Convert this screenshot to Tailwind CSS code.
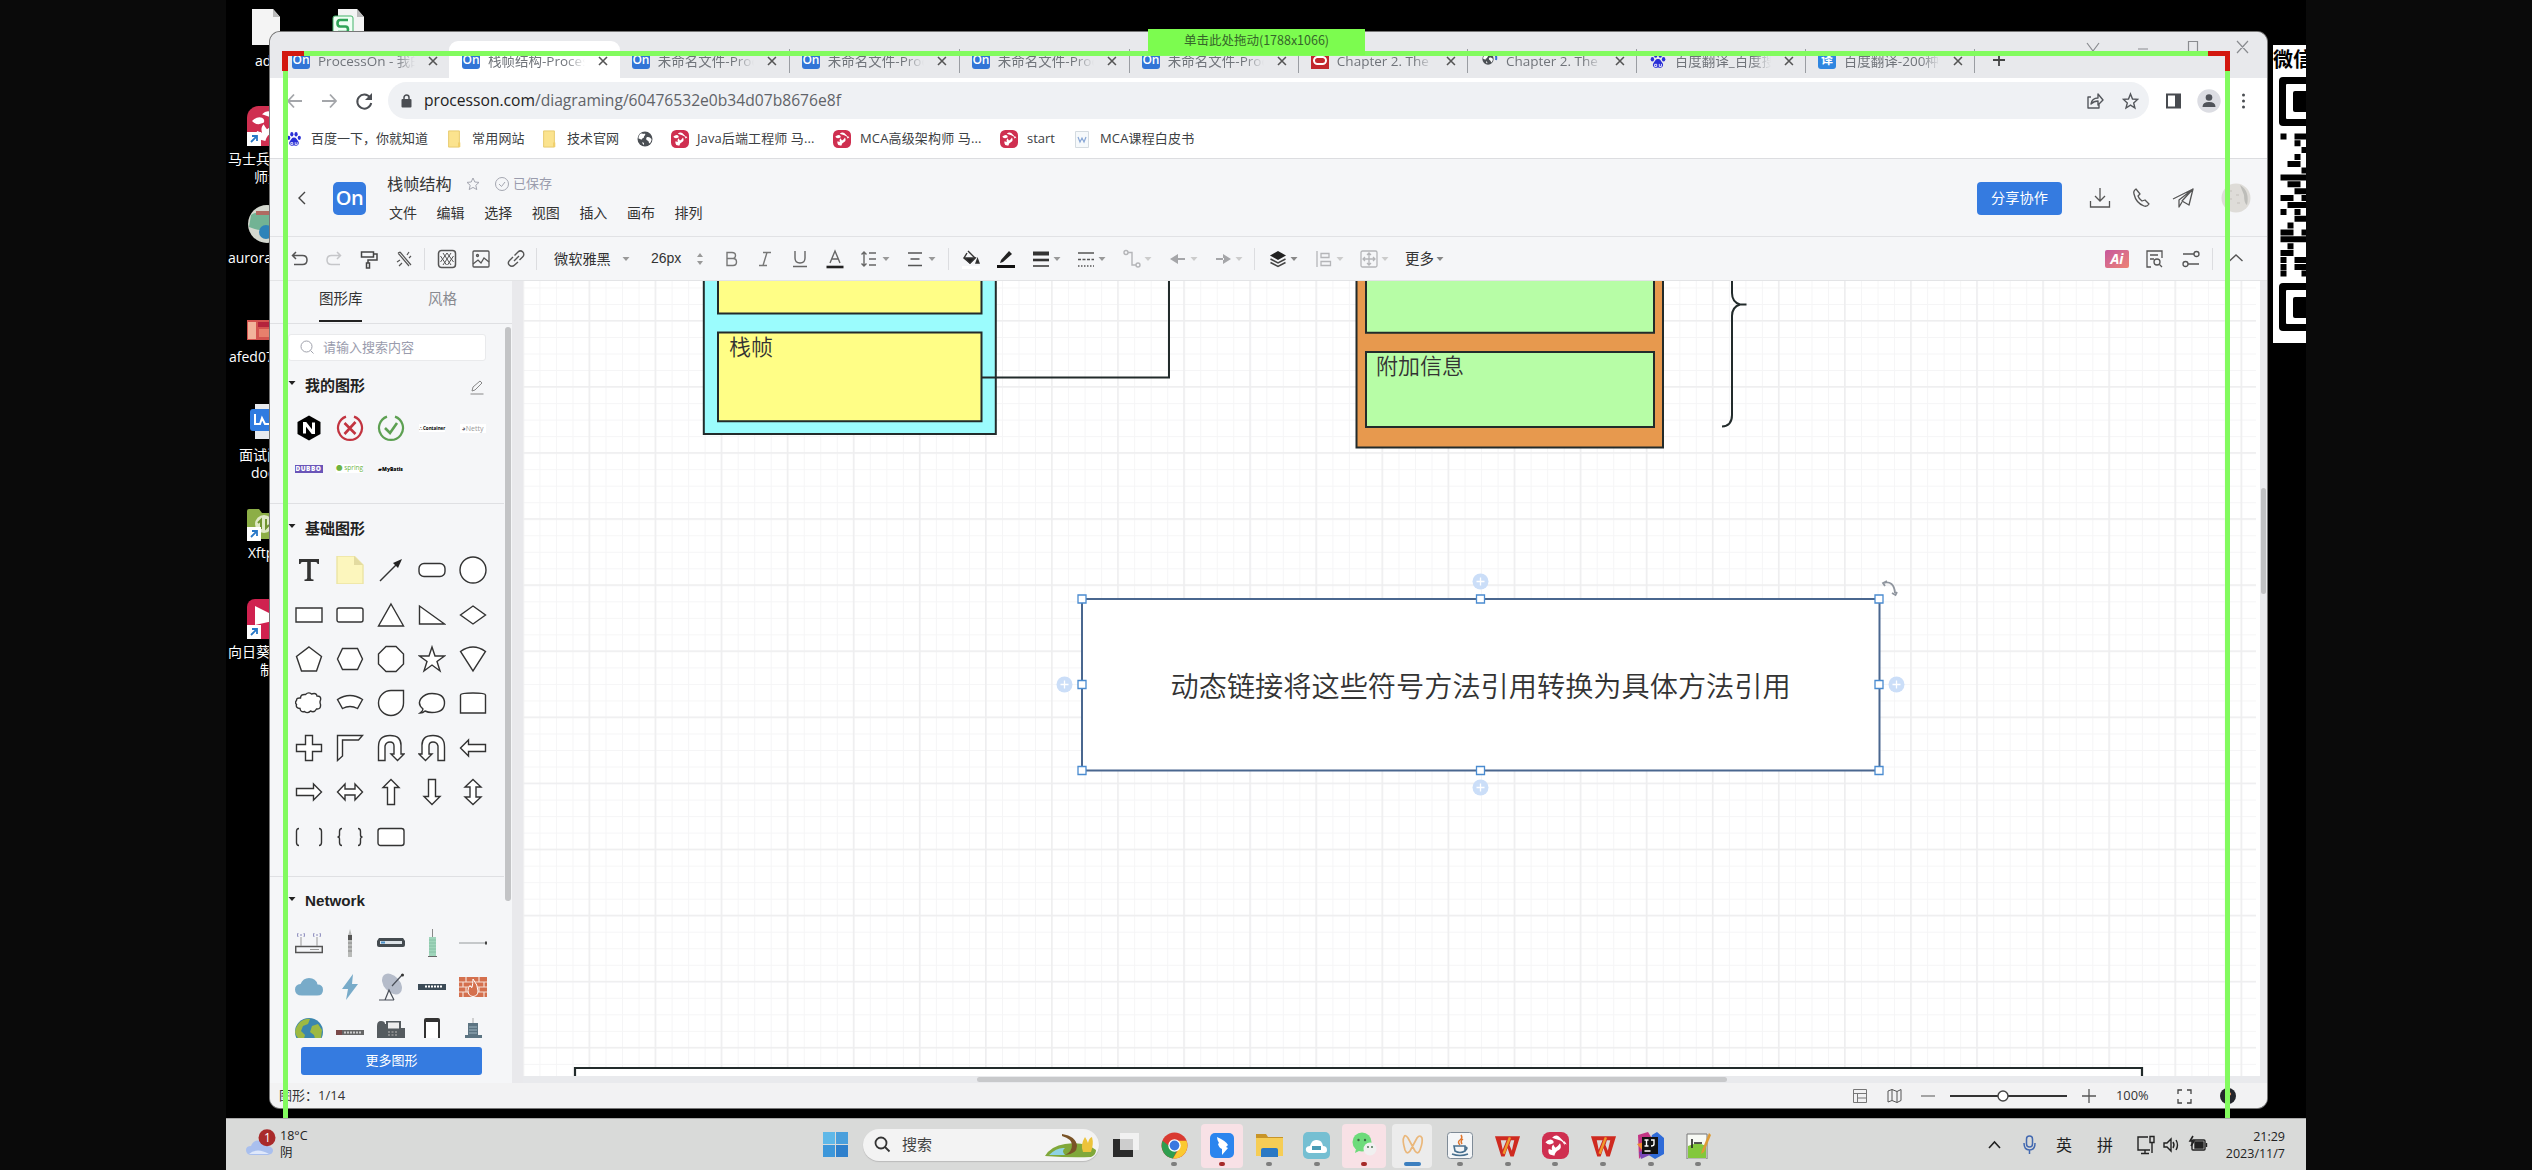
<!DOCTYPE html>
<html lang="zh-CN">
<head>
<meta charset="utf-8">
<title>栈帧结构-ProcessOn</title>
<script src="https://cdn.jsdelivr.net/npm/@tailwindcss/browser@4"></script>
</head>
<body class="bg-[#0a0a0a] overflow-hidden font-['Open_Sans','Noto_Sans_CJK_SC',sans-serif] text-[#333]">
<svg class="hidden">
  <symbol id="caret" viewBox="0 0 8 8"><path d="M.5 2h7L4 6z" fill="currentColor"/></symbol>
  <symbol id="close" viewBox="0 0 10 10"><path d="M1 1l8 8M9 1L1 9" stroke="#555" stroke-width="1.6" fill="none"/></symbol>
  <symbol id="deer" viewBox="0 0 24 24"><rect width="24" height="24" rx="7" fill="#cf2f50"/><path d="M3 9q3-3 6-2 2 1 1 3l-3 1q-2 0-4-2zM9 5q3-3 6-1l4 4q2 2 1 4-1-4-5-5-3-1-6-2z" fill="#fff"/><path d="M16 10q2 4-1 6-3 1-4 5l-4-1q-2-2-1-5l3 1q-1-3 1-5 1 2 2 3 2-1 4-4zM20 8l2 3-3-1z" fill="#fff"/></symbol>
  <symbol id="paw" viewBox="0 0 20 20"><g fill="#2a2fd6"><ellipse cx="3.4" cy="8.5" rx="2" ry="2.7"/><ellipse cx="7.3" cy="4" rx="2" ry="2.8"/><ellipse cx="12.6" cy="4" rx="2" ry="2.8"/><ellipse cx="16.6" cy="8.5" rx="2" ry="2.7"/><path d="M10 8.2c-3 0-3.300 2.500-5 4.300-2.200 2.500-.5 6 2.500 6 1.300 0 1.700-.3 2.500-.3s1.200.3 2.500.3c3 0 4.700-3.500 2.500-6-1.700-1.800-2-4.300-5-4.300z"/></g><path d="M6 14.500h2.500v2.500H6zM11.500 14v3H14v-3" fill="none" stroke="#fff" stroke-width="1"/></symbol>
  <symbol id="folder" viewBox="0 0 16 20"><path d="M2 1h12v18H2z" fill="#fbe38e" stroke="#e5c768"/><path d="M12.500 14H15v5h-2.500z" fill="#f1cf6a"/></symbol>
  <symbol id="globe" viewBox="0 0 16 16"><circle cx="8" cy="8" r="7.500" fill="#4b4f54"/><path d="M4 2.500c2 0 3 1 4 0 1 2-1 2-1 3.500S4.500 7 5 8.500c-1 .5-2-1-3.500-1C1.500 5 2.500 3.500 4 2.500zM9.500 6.500c2-1 3.500 0 5 1.500 0 2-1 3.500-2 4.500-1-1-.5-2.500-2-3s-1.500-2-1-3zM5.500 11c1 .5 2 1 1.500 2.800-1 0-2-1.800-1.500-2.800z" fill="#fff"/></symbol>
  <symbol id="wps" viewBox="0 0 28 24"><path d="M1 2h26l-6.500 21h-3.500L14 14l-3 9H7.500z" fill="#cf2a20"/><path d="M7 6h6l-4 10zM21 6h-3.500L16 11l2.500 6z" fill="#dadada"/><path d="M16.500 3L10 20" stroke="#ef9a2c" stroke-width="2.500"/></symbol>
  <symbol id="link" viewBox="0 0 14 14"><path d="M0 0h14v14H0z" fill="#fff"/><path d="M4 10l6-6M5 4h5v5" stroke="#2878c8" stroke-width="1.800" fill="none"/></symbol>
</svg>

<div class="relative w-[2532px] h-[1170px] overflow-hidden">
<!-- desktop -->
<div class="absolute left-[226px] top-0 w-[2080px] h-[1170px] bg-black overflow-hidden text-white text-[14px] leading-[18px] whitespace-nowrap">
  <svg class="absolute left-[26px] top-[9px]" width="28" height="36"><path d="M0 0h21l7 8v28H0z" fill="#f4f4f4"/><path d="M21 0v8h7z" fill="#bbb"/></svg>
  <svg class="absolute left-[106px] top-[9px]" width="32" height="30"><path d="M6 0h19l7 8v22H6z" fill="#f4f4f4"/><path d="M25 0v8h7z" fill="#bbb"/><rect x="1" y="7" width="20" height="25" rx="2" fill="#f0fff4" stroke="#45b36a"/><path d="M16 11H8q-2.500 0-2.500 3.200T8 17.500h5.500q2.500 0 2.500 3T13.500 23H6" fill="none" stroke="#2fa457" stroke-width="2.600"/></svg>
  <span class="absolute left-[29px] top-[52px]">ad</span>
  <svg class="absolute left-[21px] top-[106px]" width="38" height="40"><use href="#deer" width="40" height="40"/><use href="#link" y="26" width="14" height="14"/></svg>
  <span class="absolute left-[2px] top-[150px]">马士兵直</span>
  <span class="absolute left-[28px] top-[168px]">师资</span>
  <svg class="absolute left-[22px] top-[205px]" width="38" height="38"><circle cx="19" cy="19" r="19" fill="#d4d8cf"/><path d="M3 10c6-4 12-3 20 0v12c-8 5-14 3-22 0z" fill="#72b394"/><circle cx="18" cy="27" r="7" fill="#2d83b9"/><path d="M8 6h20v4H8z" fill="#b06a61"/></svg>
  <span class="absolute left-[2px] top-[249px]">aurora</span>
  <svg class="absolute left-[21px] top-[320px]" width="38" height="20"><path d="M0 0h38v20H0z" fill="#d4544f"/><path d="M1 2h8v17H1z" fill="#f2b39a"/><path d="M11 2h20v5H11z" fill="#b4243c"/><path d="M12 9h16v8H12z" fill="#e8806c"/></svg>
  <span class="absolute left-[3px] top-[348px]">afed07</span>
  <svg class="absolute left-[24px] top-[404px]" width="38" height="36"><path d="M5 0h30v35H5z" fill="#e8eaee"/><rect y="5" width="24" height="22" rx="3" fill="#2f7be0"/><path d="M5 10v10h5l2-6 3 6h5V10" fill="none" stroke="#fff" stroke-width="2"/></svg>
  <span class="absolute left-[13px] top-[446px]">面试问</span>
  <span class="absolute left-[25px] top-[464px]">doc</span>
  <svg class="absolute left-[21px] top-[509px]" width="38" height="32"><path d="M0 2q0-2 2-2h10l3 4h20v26H0z" fill="#8cae46"/><circle cx="17" cy="15" r="9" fill="#dfe9c6"/><path d="M14 20v-9l-3 3M19 10v9l3-3" fill="none" stroke="#6f9430" stroke-width="2"/><use href="#link" y="18" width="14" height="14"/></svg>
  <span class="absolute left-[22px] top-[544px]">Xftp</span>
  <svg class="absolute left-[21px] top-[599px]" width="38" height="40"><rect width="40" height="40" rx="8" fill="#d0214f"/><path d="M8 7l18 9v6L8 26z" fill="#fff"/><use href="#link" y="26" width="14" height="14"/></svg>
  <span class="absolute left-[2px] top-[643px]">向日葵远</span>
  <span class="absolute left-[34px] top-[661px]">制</span>
  <!-- QR card -->
  <svg class="absolute left-[2047px] top-[45px] font-['Noto_Sans_CJK_SC',sans-serif]" width="33" height="298" viewBox="0 0 33 298"><path d="M0 0h40v298H0z" fill="#fff"/><text x="0" y="22" font-size="20" font-weight="700" fill="#000">微信</text>
  <g fill="#000"><rect x="6" y="32" width="60" height="49" rx="4"/><rect x="6" y="238" width="60" height="48" rx="4"/></g><g fill="#fff"><rect x="13" y="39" width="40" height="35" rx="1"/><rect x="13" y="245" width="40" height="34" rx="1"/></g><g fill="#000"><rect x="20" y="46" width="30" height="21" rx="2"/><rect x="20" y="252" width="30" height="21" rx="2"/></g>
  <path stroke="#000" stroke-width="6" fill="none" d="M7.500 91.500h6m8 0h12M21.500 98.300h6M28.500 105h6M21.500 112h6M14.500 119h13M28.500 125.500h6M7.500 132.500h26M14.500 139.300h13M21.500 146.200h13M7.500 153h13m8 0h6M14.500 160h20M7.500 167h6m8 0h6M21.500 173.800h13M14.500 180.600h6M7.500 187.500h13m8 0h6M7.500 194.300h26M14.500 201.200h6M7.500 208h13M7.500 215h6m8 0h12M7.500 222h6m8 0h12M7.500 228.600h6m15 0h6"/></svg>
</div>

<!-- browser window -->
<div class="absolute left-[270px] top-[32px] w-[1997px] h-[1076px] rounded-[10px] overflow-hidden bg-[#f5f6f8] flex flex-col whitespace-nowrap shadow-[0_0_0_1px_#777]">
  <!-- tab strip -->
  <div class="h-[46px] shrink-0 bg-[#e8e9ec] flex items-end text-[13.5px] text-[#70747a]">
    <div class="w-[179px] h-[37px] pl-[22px] pt-[11px] flex shrink-0"><span class="w-[18px] h-[17px] rounded-[3px] bg-[#3275d6] text-white text-[12px] leading-[16px] font-semibold text-center">On</span><span class="ml-[8px] w-[97px] overflow-hidden leading-[18px] mask-r-from-80%">ProcessOn - 我的</span><svg class="mt-[4px] ml-[13px]" width="10" height="10"><use href="#close"/></svg></div>
    <div class="w-[171px] h-[37px] pl-[13px] pt-[11px] flex shrink-0 bg-white rounded-t-[9px]"><span class="w-[18px] h-[17px] rounded-[3px] bg-[#3275d6] text-white text-[12px] leading-[16px] font-semibold text-center">On</span><span class="ml-[8px] w-[97px] overflow-hidden leading-[18px] mask-r-from-80%">栈帧结构-ProcessOn</span><svg class="mt-[4px] ml-[13px]" width="10" height="10"><use href="#close"/></svg></div>
    <div class="w-[170px] h-[37px] pl-[12px] pt-[11px] flex shrink-0"><span class="w-[18px] h-[17px] rounded-[3px] bg-[#3275d6] text-white text-[12px] leading-[16px] font-semibold text-center">On</span><span class="ml-[8px] w-[97px] overflow-hidden leading-[18px] mask-r-from-80%">未命名文件-ProcessOn</span><svg class="mt-[4px] ml-[13px]" width="10" height="10"><use href="#close"/></svg><i class="ml-[12px] -mt-[3px] w-px h-[24px] bg-[#9a9da2]"></i></div>
    <div class="w-[170px] h-[37px] pl-[12px] pt-[11px] flex shrink-0"><span class="w-[18px] h-[17px] rounded-[3px] bg-[#3275d6] text-white text-[12px] leading-[16px] font-semibold text-center">On</span><span class="ml-[8px] w-[97px] overflow-hidden leading-[18px] mask-r-from-80%">未命名文件-ProcessOn</span><svg class="mt-[4px] ml-[13px]" width="10" height="10"><use href="#close"/></svg><i class="ml-[12px] -mt-[3px] w-px h-[24px] bg-[#9a9da2]"></i></div>
    <div class="w-[170px] h-[37px] pl-[12px] pt-[11px] flex shrink-0"><span class="w-[18px] h-[17px] rounded-[3px] bg-[#3275d6] text-white text-[12px] leading-[16px] font-semibold text-center">On</span><span class="ml-[8px] w-[97px] overflow-hidden leading-[18px] mask-r-from-80%">未命名文件-ProcessOn</span><svg class="mt-[4px] ml-[13px]" width="10" height="10"><use href="#close"/></svg><i class="ml-[12px] -mt-[3px] w-px h-[24px] bg-[#9a9da2]"></i></div>
    <div class="w-[169px] h-[37px] pl-[12px] pt-[11px] flex shrink-0"><span class="w-[18px] h-[17px] rounded-[3px] bg-[#3275d6] text-white text-[12px] leading-[16px] font-semibold text-center">On</span><span class="ml-[8px] w-[97px] overflow-hidden leading-[18px] mask-r-from-80%">未命名文件-ProcessOn</span><svg class="mt-[4px] ml-[13px]" width="10" height="10"><use href="#close"/></svg><i class="ml-[11px] -mt-[3px] w-px h-[24px] bg-[#9a9da2]"></i></div>
    <div class="w-[169px] h-[37px] pl-[12px] pt-[11px] flex shrink-0"><svg width="18" height="17"><path d="M0 0h18v17H0z" fill="#c2272d"/><rect x="3" y="5" width="12" height="7" rx="3.500" fill="none" stroke="#fff" stroke-width="2"/></svg><span class="ml-[8px] w-[97px] overflow-hidden leading-[18px] mask-r-from-80%">Chapter 2. The St</span><svg class="mt-[4px] ml-[13px]" width="10" height="10"><use href="#close"/></svg><i class="ml-[11px] -mt-[3px] w-px h-[24px] bg-[#9a9da2]"></i></div>
    <div class="w-[169px] h-[37px] pl-[14px] pt-[11px] flex shrink-0"><svg width="16" height="17"><use href="#globe" y="1" width="12" height="12"/><path d="M12 1q3 2 2 7" stroke="#3a6fd0" stroke-width="2" fill="none"/></svg><span class="ml-[8px] w-[97px] overflow-hidden leading-[18px] mask-r-from-80%">Chapter 2. The St</span><svg class="mt-[4px] ml-[13px]" width="10" height="10"><use href="#close"/></svg><i class="ml-[11px] -mt-[3px] w-px h-[24px] bg-[#9a9da2]"></i></div>
    <div class="w-[169px] h-[37px] pl-[12px] pt-[11px] flex shrink-0"><svg width="18" height="17"><use href="#paw" width="18" height="17"/></svg><span class="ml-[8px] w-[97px] overflow-hidden leading-[18px] mask-r-from-80%">百度翻译_百度搜索</span><svg class="mt-[4px] ml-[13px]" width="10" height="10"><use href="#close"/></svg><i class="ml-[11px] -mt-[3px] w-px h-[24px] bg-[#9a9da2]"></i></div>
    <div class="w-[169px] h-[37px] pl-[12px] pt-[11px] flex shrink-0"><span class="w-[18px] h-[17px] rounded-[3px] bg-[#2f86e0] text-white text-[12px] leading-[16px] font-bold text-center">译</span><span class="ml-[8px] w-[97px] overflow-hidden leading-[18px] mask-r-from-80%">百度翻译-200种语言</span><svg class="mt-[4px] ml-[13px]" width="10" height="10"><use href="#close"/></svg><i class="ml-[11px] -mt-[3px] w-px h-[24px] bg-[#9a9da2]"></i></div>
    <svg class="ml-[18px] mb-[12px]" width="12" height="12"><path d="M6 0v12M0 6h12" stroke="#444" stroke-width="1.800"/></svg>
    <svg class="ml-auto mr-[18px] mb-[23px]" width="163" height="16" fill="none" stroke="#8a8c90" stroke-width="1.200"><path d="M1 4l6 8 6-8M52 10h10M102.500 2.500h9v11h-9zM151 2l11 12M162 2l-11 12"/></svg>
  </div>
  <!-- address bar -->
  <div class="h-[45px] shrink-0 bg-white flex items-center">
    <svg class="ml-[16px]" width="90" height="20" fill="none" stroke="#a4a6aa" stroke-width="1.800"><path d="M16 10H2m6-6.500L2 10l6 6.500M36 10h14m-6-6.500l6 6.500-6 6.500"/><path d="M84 6.500A7 7 0 1 0 85.200 12" stroke="#4c4f54" stroke-width="2"/><path d="M86 2v7h-7z" fill="#4c4f54" stroke="none"/></svg>
    <div class="ml-[12px] w-[1761px] h-[37px] rounded-full bg-[#eff1f4] flex items-center">
      <svg class="ml-[13px]" width="11" height="14"><rect x=".5" y="5" width="10" height="8.500" rx="1" fill="#4b4e53"/><path d="M3 5V3.500a2.500 2.500 0 0 1 5 0V5" stroke="#4b4e53" stroke-width="1.500" fill="none"/></svg>
      <span class="ml-[12px] text-[15.64px] leading-[20px] text-[#5f6368] -mt-px"><span class="text-[#222]">processon.com</span>/diagraming/60476532e0b34d07b8676e8f</span>
      <svg class="ml-auto mr-[10px]" width="54" height="18" fill="none" stroke="#54575c" stroke-width="1.400"><path d="M6 5H3v11h11v-4M6 12q1-6 7-6V2l5 6-5 5V9q-4 0-7 3z" stroke-linejoin="round"/><path d="M45.500 2l2 5 5 .4-3.800 3.500 1.200 5.100-4.400-2.800L41 16l1.300-5.100-3.800-3.500 5-.4z"/></svg>
    </div>
    <svg class="ml-[16px]" width="86" height="24"><path d="M2 5.500h13v13H2z" fill="none" stroke="#484b50" stroke-width="2"/><path d="M10 5h5v14h-5z" fill="#484b50"/><circle cx="44" cy="12" r="11.700" fill="#dcdde3"/><circle cx="44" cy="8.500" r="3.300" fill="#50535a"/><path d="M37.500 18q0-5 6.500-5t6.500 5z" fill="#50535a"/><g fill="#4a4d52"><circle cx="78.500" cy="6" r="1.500"/><circle cx="78.500" cy="12" r="1.500"/><circle cx="78.500" cy="18" r="1.500"/></g></svg>
  </div>
  <!-- bookmarks -->
  <div class="h-[36px] shrink-0 bg-white border-b border-[#dcdde0] pb-[3px] flex items-center text-[13px] text-[#3c4043]">
    <svg class="ml-[16px]" width="16" height="16"><use href="#paw"/></svg><span class="ml-[9px] w-[118px]">百度一下，你就知道</span>
    <svg class="ml-[17px]" width="16" height="18"><use href="#folder"/></svg><span class="ml-[10px] w-[53px] tracking-[.2px]">常用网站</span>
    <svg class="ml-[16px]" width="16" height="18"><use href="#folder"/></svg><span class="ml-[10px] w-[53px]">技术官网</span>
    <svg class="ml-[17px]" width="16" height="16"><use href="#globe"/></svg>
    <svg class="ml-[18px]" width="18" height="18"><use href="#deer"/></svg><span class="ml-[8px] w-[119px] tracking-[.1px]">Java后端工程师 马...</span>
    <svg class="ml-[17px]" width="18" height="18"><use href="#deer"/></svg><span class="ml-[9px] w-[124px] tracking-[.15px]">MCA高级架构师 马...</span>
    <svg class="ml-[16px]" width="18" height="18"><use href="#deer"/></svg><span class="ml-[9px] w-[30px]">start</span>
    <svg class="ml-[18px]" width="14" height="17"><path d="M.5.500h13v16H.5z" fill="#f6f9fb" stroke="#d4dbe0"/><path d="M3 6l2 5 2-4 2 4 2-5" fill="none" stroke="#8aa8d6" stroke-width="1.200"/></svg><span class="ml-[11px] tracking-[.15px]">MCA课程白皮书</span>
  </div>
  <!-- app header -->
  <div class="h-[78px] shrink-0 border-b border-[#e1e2e5] pt-px flex items-center">
    <svg class="ml-[28px]" width="8" height="14"><path d="M7 1L1 7l6 6" fill="none" stroke="#444" stroke-width="1.400"/></svg>
    <span class="ml-[27px] w-[33px] h-[33px] rounded-[5px] bg-[#357be0] text-white text-[20px] leading-[32px] font-semibold text-center tracking-[-.5px]">On</span>
    <div class="ml-[21px]">
      <div class="h-[29px] flex items-center"><span class="text-[16.200px] leading-[24px] w-[66px]">栈帧结构</span><svg class="ml-[13px]" width="14" height="14"><path d="M7 1l1.800 4 4.200.4-3.200 2.900 1 4.300L7 10.400l-3.800 2.200 1-4.300L1 5.400 5.200 5z" fill="none" stroke="#a4a6b0"/></svg><svg class="ml-[15px]" width="14" height="14" fill="none" stroke="#a4a6b0"><circle cx="7" cy="7" r="6.500"/><path d="M4 7l2.500 2.500L10 5"/></svg><span class="ml-[4px] text-[13px] text-[#9a9cad]">已保存</span></div>
      <div class="h-[29px] ml-[2px] flex items-center text-[14px] gap-[19.600px]"><span>文件</span><span>编辑</span><span>选择</span><span>视图</span><span>插入</span><span>画布</span><span>排列</span></div>
    </div>
    <span class="ml-auto w-[85px] h-[33px] rounded-[4px] bg-[#357be0] text-white text-[14.200px] leading-[31px] text-center">分享协作</span>
    <svg class="ml-[27px]" width="106" height="22" fill="none" stroke="#555" stroke-width="1.300"><path d="M11 1v13m-5-5l5 5 5-5M1.500 14v6h19v-6"/><path d="M47 2q-3 2-2 5 2 9 10 12 3 1 5-2l-4-4-3 1q-3-2-4-5l2-2z" stroke-linejoin="round"/><path d="M84 12L104 2l-4 16-7-4 11-12-14 11v7l3-5" stroke-linejoin="round"/></svg>
    <svg class="ml-[26px] mr-[16px]" width="30" height="30"><circle cx="15" cy="15" r="14.500" fill="#dedcd8"/><path d="M19 2q10 6 7 20-3-2-3-10z" fill="#bdbdb9"/><path d="M8 8h3m4 4h3M8 16h3m5 4h3" stroke="#c4c0bb"/></svg>
  </div>
  <!-- toolbar -->
  <div class="h-[44px] shrink-0 border-b border-[#e3e4e6] flex items-center text-[#555]">
    <svg class="ml-[18px]" width="24" height="24" fill="none" stroke="#555" stroke-width="1.500"><path d="M8 5L4.500 8.500 8 12M5 8.500h9.500q4.500 0 4.500 4.500t-4.500 4.500H6"/></svg>
    <svg class="ml-[10px]" width="24" height="24" fill="none" stroke="#c5c6c9" stroke-width="1.500"><path d="M15 5l3.500 3.500L15 12M18 8.500H9.500Q5 8.500 5 13t4.500 4.500H18"/></svg>
    <svg class="ml-[11px]" width="24" height="24" fill="none" stroke="#444" stroke-width="1.500"><path d="M4.500 5h12v5h-12zM16.500 7H20v6h-9v3M9.500 16h3v5h-3z"/></svg>
    <svg class="ml-[11px]" width="24" height="24" fill="none" stroke="#555" stroke-width="1.200"><path d="M6 6l11 13M8 5l11 13M17 5l-2 3M19 9l-2 2M5 15l3-2M7 19l3-3M6 6l2-1"/></svg>
    <i class="ml-[8px] w-px h-[22px] bg-[#dcdde0]"></i>
    <svg class="ml-[10px]" width="24" height="24" fill="none" stroke="#555" stroke-width="1.500"><rect x="3.500" y="3.500" width="17" height="17" rx="3"/><path d="M8 6l8 12M16 6L8 18M5.500 9l6 9M18.500 9l-6 9M12 6l6.500 9M12 6l-6.500 9" stroke-width="1"/></svg>
    <svg class="ml-[10px]" width="24" height="24" fill="none" stroke="#555" stroke-width="1.300"><rect x="4" y="4" width="16" height="16" rx="1"/><path d="M4 17l5-4 3 3 3-5 5 4"/><circle cx="8.500" cy="8.500" r="1"/></svg>
    <svg class="ml-[11px]" width="24" height="24" fill="none" stroke="#555" stroke-width="1.400"><path d="M10 14l5-5M9 10l-3.500 3.500a3.300 3.300 0 0 0 4.800 4.800L14 15M10.500 8.500L14 5a3.300 3.300 0 0 1 4.800 4.800L15.500 13"/></svg>
    <i class="ml-[8px] w-px h-[22px] bg-[#dcdde0]"></i>
    <span class="ml-[17px] w-[58px] text-[14.200px] text-[#333]">微软雅黑</span><svg class="ml-[10px] text-[#999]" width="8" height="8"><use href="#caret"/></svg>
    <span class="ml-[21px] w-[34px] text-[14px] text-[#333] font-['Liberation_Sans',sans-serif]">26px</span>
    <svg class="ml-[10px]" width="10" height="14" fill="#999"><path d="M2 5l3-4 3 4zM2 9l3 4 3-4z"/></svg>
    <svg class="ml-[14px]" width="24" height="24" fill="none" stroke="#777" stroke-width="1.400"><path d="M8 5.500h5q3.500 0 3.500 3t-3.500 3H8zM8 11.500h6q3.500 0 3.500 3.500t-3.500 3.500H8z"/></svg>
    <svg class="ml-[10px]" width="24" height="24" fill="none" stroke="#777" stroke-width="1.400"><path d="M10 5.500h8M6 18.500h8M14 5.500l-4 13"/></svg>
    <svg class="ml-[11px]" width="24" height="24" fill="none" stroke="#666" stroke-width="1.400"><path d="M7 4v7q0 5 5 5t5-5V4M5 19.500h14"/></svg>
    <svg class="ml-[11px]" width="24" height="24" fill="none" stroke="#666" stroke-width="1.400"><path d="M7 16l5-12 5 12M9 12h6"/><path d="M3.500 20h17" stroke="#222" stroke-width="2.600"/></svg>
    <svg class="ml-[10px]" width="24" height="24" fill="none" stroke="#666" stroke-width="1.400"><path d="M7 5v14M4.500 7.500L7 5l2.500 2.500M4.500 16.500L7 19l2.500-2.500M12 6h7M12 12h7M12 18h7"/></svg><svg class="ml-px text-[#999]" width="8" height="8"><use href="#caret"/></svg>
    <svg class="ml-[13px]" width="24" height="24" fill="none" stroke="#555" stroke-width="1.400"><path d="M5 6h14M7.500 12h9M5 18.500h14"/></svg><svg class="ml-px text-[#999]" width="8" height="8"><use href="#caret"/></svg>
    <i class="ml-[12px] w-px h-[22px] bg-[#dcdde0]"></i>
    <svg class="ml-[10px]" width="24" height="24" fill="none" stroke="#333" stroke-width="1.400"><path d="M9 4l7 7-5 5-6-5 3-5"/><path d="M6 11h10l-5 5z" fill="#222"/><path d="M18.500 12l1.500 4h-3z" fill="#222"/><path d="M3 20.500h18" stroke="#fff" stroke-width="3"/></svg>
    <svg class="ml-[11px]" width="24" height="24"><path d="M7 13l8-9 3 3-9 8-3 1z" fill="#222"/><path d="M3 18h18v3H3z" fill="#111"/></svg>
    <svg class="ml-[11px]" width="24" height="24" stroke="#333"><path d="M4 6.500h16" stroke-width="4"/><path d="M4 13h16" stroke-width="2.600"/><path d="M4 19h16" stroke-width="1.500"/></svg><svg class="text-[#999]" width="8" height="8"><use href="#caret"/></svg>
    <svg class="ml-[13px]" width="24" height="24" stroke="#555" stroke-width="1.400"><path d="M4 6h16"/><path d="M4 12.500h16" stroke-dasharray="3 1.500"/><path d="M4 19h16" stroke-dasharray="1.500 1.500"/></svg><svg class="text-[#999]" width="8" height="8"><use href="#caret"/></svg>
    <svg class="ml-[14px]" width="24" height="24" fill="none" stroke="#b4b5b8" stroke-width="1.400"><circle cx="6" cy="5.500" r="2"/><circle cx="18" cy="18" r="2"/><path d="M8 5.500h4V18h4"/></svg><svg class="text-[#ccc]" width="8" height="8"><use href="#caret"/></svg>
    <svg class="ml-[14px]" width="24" height="24"><path d="M4 12l8-5v10zM11 11h8v2h-8z" fill="#a5a6a9"/></svg><svg class="text-[#ccc]" width="8" height="8"><use href="#caret"/></svg>
    <svg class="ml-[13px]" width="24" height="24"><path d="M20 12l-8-5v10zM5 11h8v2H5z" fill="#a5a6a9"/></svg><svg class="text-[#ccc]" width="8" height="8"><use href="#caret"/></svg>
    <i class="ml-[11px] w-px h-[22px] bg-[#dcdde0]"></i>
    <svg class="ml-[11px]" width="24" height="24"><path d="M12 4l8 4.500-8 4.500-8-4.500z" fill="#222"/><path d="M4.500 12l7.500 4 7.500-4M4.500 15.500l7.500 4 7.500-4" fill="none" stroke="#444" stroke-width="1.500"/></svg><svg class="text-[#888]" width="8" height="8"><use href="#caret"/></svg>
    <svg class="ml-[14px]" width="24" height="24" fill="none" stroke="#b4b5b8" stroke-width="1.300"><path d="M5 4v16M9 6.500h8v4H9zM9 14.500h9.500v4H9z"/></svg><svg class="text-[#ccc]" width="8" height="8"><use href="#caret"/></svg>
    <svg class="ml-[13px]" width="24" height="24" fill="none" stroke="#b4b5b8" stroke-width="1.300"><rect x="4" y="4" width="16" height="16" rx="1.500"/><path d="M12 6v12M6 12h12M10 8l2-2 2 2M10 16l2 2 2-2M8 10l-2 2 2 2M16 10l2 2-2 2"/></svg><svg class="text-[#ccc]" width="8" height="8"><use href="#caret"/></svg>
    <span class="ml-[16px] w-[30px] text-[14.500px] text-[#333]">更多</span><svg class="ml-px text-[#888]" width="8" height="8"><use href="#caret"/></svg>
    <span class="ml-auto w-[24px] h-[18px] rounded-[2px] bg-linear-to-br from-[#c6579c] to-[#ee8272] text-white text-[14px] leading-[18px] font-bold italic text-center">Ai</span>
    <svg class="ml-[13px]" width="24" height="24" fill="none" stroke="#555" stroke-width="1.300"><path d="M9 20H5V4h15v7M8 8h8M8 12h4"/><circle cx="15" cy="15" r="3"/><path d="M17.500 17.500L20 20"/></svg>
    <svg class="ml-[13px]" width="24" height="24" fill="none" stroke="#555" stroke-width="1.300"><path d="M4 7h11M9 17h11"/><circle cx="17.500" cy="7" r="2.500"/><circle cx="6.500" cy="17" r="2.500"/></svg>
    <i class="ml-[9px] w-px h-[22px] bg-[#dcdde0]"></i>
    <svg class="ml-[11px] mr-[19px]" width="24" height="24"><path d="M5.500 14L12 8l6.500 6" fill="none" stroke="#555" stroke-width="1.400"/></svg>
  </div>

  <div class="flex-1 flex min-h-0">
    <!-- shape library -->
    <div class="w-[242px] shrink-0 flex flex-col relative">
      <div class="h-[43px] shrink-0 border-b border-[#dfe0e3] flex text-[14.500px]">
        <span class="ml-[49px] h-[41px] w-[43px] border-b-2 border-[#222] leading-[36px]">图形库</span><span class="ml-[66px] leading-[36px] text-[#888a90]">风格</span>
      </div>
      <div class="ml-[18px] mt-[10px] w-[198px] h-[27px] shrink-0 rounded-[3px] bg-white border border-[#e9eaec] flex items-center text-[13px] text-[#9a9cad]"><svg class="ml-[11px] mr-[8px]" width="15" height="15" fill="none" stroke="#a0a2ac"><circle cx="6.500" cy="6.500" r="5.500"/><path d="M10.500 10.500l3 3"/></svg>请输入搜索内容</div>
      <div class="mt-[12px] h-[24px] shrink-0 flex items-center text-[15px] font-semibold text-[#222]"><svg class="ml-[18px] mb-[4px]" width="8" height="8"><use href="#caret"/></svg><span class="ml-[9px]">我的图形</span><svg class="ml-auto mr-[27px] mt-[4px]" width="16" height="16" fill="none" stroke="#888"><path d="M3 12l1-4 7-6 2 2-7 7zM1.500 15h13"/></svg></div>
      <div class="ml-[18px] mt-[11px] w-[205px] h-[81px] shrink-0 grid grid-cols-5 grid-rows-2 place-items-center">
        <svg width="28" height="28"><path d="M14 1.500L25.500 8v12L14 26.500 2.500 20V8z" fill="#000"/><path d="M9.500 19.500V9.500h1l7 9h1V8.500" fill="none" stroke="#fff" stroke-width="3"/></svg>
        <svg width="28" height="28" fill="none" stroke="#c23440"><path d="M10 2.600A12 12 0 1 0 18 2.600" stroke-width="2.200"/><path d="M8.500 9l11 11M19.500 8l-11 12" stroke-width="2.600"/></svg>
        <svg width="28" height="28" fill="none" stroke="#5da052"><path d="M10 2.600A12 12 0 1 0 18 2.600" stroke-width="2.200"/><path d="M8 14l5 5 7-10" stroke-width="2.600"/></svg>
        <span class="w-[26px] h-[8px] bg-white text-[4.500px] leading-[9px] text-center font-bold text-black">∴Container</span>
        <span class="w-[26px] h-[9px] bg-white text-[7px] leading-[9px] text-center text-[#999]"><b class="text-[#667]">◕</b>Netty</span>
        <span class="w-[28px] h-[8px] bg-[#6a55b8] text-[6.500px] leading-[8px] text-center font-extrabold text-white tracking-[.5px]">DUBBO</span>
        <span class="w-[27px] h-[9px] bg-white text-[6.500px] leading-[8px] text-center text-[#6db33f]">● spring</span>
        <span class="w-[25px] h-[8px] text-[5px] leading-[8px] text-center font-extrabold text-black">▰MyBatis</span>
      </div>
      <div class="mt-[14px] w-[234px] border-t border-[#dfe0e3] shrink-0"></div>
      <div class="mt-[12px] h-[24px] shrink-0 flex items-center text-[15px] font-semibold text-[#222]"><svg class="ml-[18px] mb-[4px]" width="8" height="8"><use href="#caret"/></svg><span class="ml-[9px]">基础图形</span></div>
      <div class="ml-[18px] mt-[8px] w-[205px] h-[311px] shrink-0 grid grid-cols-5 grid-rows-7 place-items-center fill-white stroke-[#333] stroke-[1.400]">
        <svg width="28" height="28"><path d="M4 3h20v5h-1.500q0-2-2-2h-4.700v16q0 1.500 2.700 1.500V25h-9v-1.500q2.700 0 2.700-1.500V6H7.500q-2 0-2 2H4z" fill="#333" stroke="none"/></svg>
        <svg width="28" height="28"><path d="M1 0h17l9 9v19H1z" fill="#fcf6bd" stroke="#ece4a4"/><path d="M18 0v9h9z" fill="#e3dba0" stroke="none"/></svg>
        <svg width="28" height="28"><path d="M3 25L21 7"/><path d="M25 3l-4 9-5-5z" fill="#222" stroke="none"/></svg>
        <svg width="28" height="28"><rect x="1" y="7.500" width="26" height="13" rx="5"/></svg>
        <svg width="28" height="28"><circle cx="14" cy="14" r="13"/></svg>
        <svg width="28" height="28"><path d="M1 7h26v14H1z"/></svg>
        <svg width="28" height="28"><rect x="1" y="7" width="26" height="14" rx="2"/></svg>
        <svg width="28" height="28"><path d="M14 3l12.500 22h-25z"/></svg>
        <svg width="28" height="28"><path d="M1.500 5v18h25z"/></svg>
        <svg width="28" height="28"><path d="M14 5l12.500 9L14 23 1.500 14z"/></svg>
        <svg width="28" height="28"><path d="M14 2l12.500 9.500-5 14.500h-15l-5-14.500z"/></svg>
        <svg width="28" height="28"><path d="M6.500 3.500h15l5 10.500-5 10.500h-15L1.500 14z"/></svg>
        <svg width="28" height="28"><path d="M9 1.500h10L26.500 9v10L19 26.500H9L1.500 19V9z"/></svg>
        <svg width="28" height="28"><path d="M14 2l3 9h9.500L19 16.500 22 26l-8-6-8 6 3-9.500L1.500 11H11z"/></svg>
        <svg width="28" height="28"><path d="M1.500 6.500q12.500-9 25 0L14 26z"/></svg>
        <svg width="28" height="28"><path d="M5.500 9q0-4 5-3.500 3-3 6-.5 5-1.500 5.500 2 4.500 0 3.500 4-1 2 0 4.500.5 5-4 4.500-2 4-6 2-3 3-6 .5-4 1-4.500-3-4.500-.5-3.500-4-2-2 0-4 0-3 4-2.500z"/></svg>
        <svg width="28" height="28"><path d="M1.500 10.500q12.500-8 25 0l-5 9q-7.500-4-15 0z"/></svg>
        <svg width="28" height="28"><path d="M14 1.500h12.500V14A12.500 12.500 0 1 1 14 1.500z"/></svg>
        <svg width="28" height="28"><path d="M5 20Q-1 15 3 9.500 7 4.500 14 4.500q12.500 0 12.500 9.500T14 23.500q-4 0-7-1.500-2 2-5 2 3-2 3-4z"/></svg>
        <svg width="28" height="28"><path d="M1.500 24V6q0-2 12.500-2t12.500 2v18z"/></svg>
        <svg width="28" height="28"><path d="M10.500 1.500h7v9h9v7h-9v9h-7v-9h-9v-7h9z"/></svg>
        <svg width="28" height="28"><path d="M1.500 1.500h25l-4 4.500h-16v16l-5 4.500z"/></svg>
        <svg width="28" height="28"><path d="M1.500 26.500V13Q1.500 1.500 13 1.500T24 12v8h3l-6.500 6.500L14 20h3v-8q0-4-4-4t-5 4v14.500z"/></svg>
        <svg width="28" height="28"><path d="M26.500 26.500V13Q26.500 1.500 15 1.500T4 12v8H1l6.500 6.500L14 20h-3v-8q0-4 4-4t5 4v14.500z"/></svg>
        <svg width="28" height="28"><path d="M1.500 14l8-8v4.500h17v7h-17V22z"/></svg>
        <svg width="28" height="28"><path d="M26.500 14l-8-8v4.500h-17v7h17V22z"/></svg>
        <svg width="28" height="28"><path d="M1.500 14L9 6v5h10V6l7.500 8-7.500 8v-5H9v5z"/></svg>
        <svg width="28" height="28"><path d="M14 1.500l8 8h-4.500v17h-7v-17H6z"/></svg>
        <svg width="28" height="28"><path d="M14 26.500l8-8h-4.500v-17h-7v17H6z"/></svg>
        <svg width="28" height="28"><path d="M14 1.500L22 9h-5v10h5l-8 7.500L6 19h5V9H6z"/></svg>
        <svg width="28" height="28" fill="none"><path d="M4 5.500q-2.500 0-2.500 3v11q0 3 2.500 3M24 5.500q2.500 0 2.500 3v11q0 3-2.500 3"/></svg>
        <svg width="28" height="28" fill="none"><path d="M6 5.500q-2.500 0-2.500 3V12q0 2-2 2 2 0 2 2v3.500q0 3 2.500 3M22 5.500q2.500 0 2.500 3V12q0 2 2 2-2 0-2 2v3.500q0 3-2.500 3"/></svg>
        <svg width="28" height="28"><rect x="1" y="5.500" width="26" height="17" rx="2.500"/></svg>
      </div>
      <div class="mt-[17px] w-[234px] border-t border-[#dfe0e3] shrink-0"></div>
      <div class="mt-[12px] h-[24px] shrink-0 flex items-center text-[15.200px] font-bold text-[#222] font-['Liberation_Sans',sans-serif]"><svg class="ml-[18px] mb-[4px]" width="8" height="8"><use href="#caret"/></svg><span class="ml-[9px]">Network</span></div>
      <div class="ml-[18px] mt-[8px] w-[205px] h-[117px] shrink-0 overflow-hidden"><div class="h-[133px] grid grid-cols-5 grid-rows-3 place-items-center">
        <svg width="28" height="28" fill="none" stroke="#555"><rect x=".7" y="17.500" width="26.600" height="6" stroke-width="1.500"/><path d="M6 17V8M22 17V8M15 20.500h9" stroke="#999"/><path d="M3 4q-1 2 0 4M9 4q1 2 0 4M19 4q-1 2 0 4M25 4q1 2 0 4M5 6h2m14 0h2" stroke="#88b"/></svg>
        <svg width="28" height="28"><path d="M12 28V7l2-7 2 7v21z" fill="#b9bbb9"/><path d="M12 6h4v5h-4z" fill="#555"/><path d="M12 14h4m-4 4h4m-4 4h4" stroke="#888"/></svg>
        <svg width="28" height="28"><path d="M2 9h24l2 3v4q0 2-2 2H2q-2 0-2-2v-4z" fill="#444b50"/><path d="M3 12h22v3H3z" fill="#dde3e8"/><path d="M4 12.500h4v2H4z" fill="#4a90c8"/></svg>
        <svg width="28" height="28"><path d="M14.500 0v8" stroke="#888"/><path d="M11 8h7v19h-7z" fill="#9fd5bb"/><path d="M11 11h7m-7 3h7m-7 3h7m-7 3h7m-7 3h7" stroke="#86c0a5"/><path d="M10 27.500h9" stroke="#666"/></svg>
        <svg width="28" height="28"><path d="M0 13h28v2H0z" fill="#c5c8ca"/><path d="M26 12.500h2v3h-2z" fill="#444"/></svg>
        <svg width="28" height="28"><path d="M7 22.500q-7 0-7-6 0-5 5.500-5.500Q8 5 14 5q7 0 8.500 6.500 5.500 0 5.500 5.500t-6 5.500z" fill="#78abc9"/></svg>
        <svg width="28" height="28"><path d="M17 1L6 16h6l-2 11 12-16h-6z" fill="#78abc9"/></svg>
        <svg width="28" height="28"><ellipse cx="15" cy="11" rx="12" ry="8" transform="rotate(48 15 11)" fill="#b5bcca"/><path d="M15 13l10-11M8 27l4-10 5 10M2 27h15" stroke="#4a4f58" fill="none" stroke-width="1.200"/><circle cx="25.500" cy="2" r="1.500" fill="#333"/></svg>
        <svg width="28" height="28"><path d="M0 11h28v6H0z" fill="#3c4b57"/><path d="M7 13.500h18" stroke="#fff" stroke-width="2" stroke-dasharray="2 1"/></svg>
        <svg width="28" height="28"><path d="M0 4h28v20H0z" fill="#d4704e"/><path d="M0 9h28M0 14h28M0 19h28M7 4v5M20 4v5M4 9v5M25 9v5M7 14v5M20 14v5M4 19v5M25 19v5" stroke="#f4ddd3" stroke-width="1.200"/><path d="M14 6q5 6 5 12 0 5-5 5.500-5-.5-5-6 0-3 2-5 1 2 2 2 1-4 1-8.500z" fill="#d4704e" stroke="#fff"/></svg>
        <svg width="28" height="28"><circle cx="14" cy="14" r="14" fill="#3b86ae"/><path d="M5 4q6-4 10-3l-2 5-5 2-2 5 4 4-2 7Q1 20 0 14 1 8 5 4zM17 8l6-2 4 6-1 8-5 4-2-7-4-3z" fill="#9db942"/></svg>
        <svg width="28" height="28"><path d="M0 12h28v5H0z" fill="#666"/><path d="M0 12h6v5H0z" fill="#7b4a4a"/><path d="M8 14.500h18" stroke="#ccc" stroke-width="2" stroke-dasharray="2 1"/></svg>
        <svg width="28" height="28"><path d="M0 8q0-5 4-5t4 3h1V3h15v7h4v14H0z" fill="#555b5f"/><path d="M11 4.500h11v6H11z" fill="#eee"/><path d="M11 14h10m-10 3h10" stroke="#999" stroke-width="1.500" stroke-dasharray="2 1.500"/></svg>
        <svg width="28" height="28"><rect x="6" y="0" width="16" height="28" rx="2" fill="#333"/><path d="M8 4h12v22H8z" fill="#fff"/></svg>
        <svg width="28" height="28"><path d="M14 0v6" stroke="#aaa"/><path d="M9 5h10v12h4v8H6v-8h3z" fill="#5c7482"/><path d="M10 9h8m-8 3h8m-8 3h8" stroke="#9db3bf"/></svg>
      </div></div>
      <div class="ml-[31px] mt-[9px] w-[181px] h-[28px] shrink-0 rounded-[3px] bg-[#357be0] text-white text-[13px] leading-[27px] text-center">更多图形</div>
      <i class="absolute left-[235px] top-[46px] w-[6px] h-[574px] rounded-full bg-[#c3c4c6]"></i>
    </div>
    <div class="w-[11px] shrink-0 bg-[#e9e9ec]"></div>
    <!-- canvas -->
    <div class="flex-1 flex flex-col bg-[#e9eaed]">
      <div class="flex">
        <svg class="font-['Noto_Sans_CJK_SC',sans-serif]" width="1737" height="795" viewBox="523 281 1737 795">
          <defs>
            <pattern id="minor" x="589" y="320.500" width="16.520" height="16.520" patternUnits="userSpaceOnUse"><path d="M0 .5h16.520M.5 0v16.520" stroke="#f5f5f6"/></pattern>
            <pattern id="major" x="588.500" y="320" width="66.080" height="66.080" patternUnits="userSpaceOnUse"><path d="M0 .8h66.080M.8 0v66.080" stroke="#eeeeef" stroke-width="1.500"/></pattern>
          </defs>
          <path d="M523 281h1737v795H523z" fill="#fff"/><path d="M523 281h1733v795H523z" fill="url(#minor)"/><path d="M523 281h1733v795H523z" fill="url(#major)"/>
          <g stroke="#222b2b" stroke-width="2">
            <path d="M703.800 270h292v164h-292z" fill="#9bfcfd"/><path d="M718 270h263.500v43.500H718zM718 332.500h263.500v88.800H718z" fill="#fffe86"/>
            <path d="M981.500 377.500H1169V270" fill="none"/>
            <path d="M1356.500 270h306.500v177.500h-306.500z" fill="#e7994e"/><path d="M1366 270h288v62.700h-288zM1366 352h288v75h-288z" fill="#b7fda6"/>
            <path d="M1732 270v23q0 9 8 11.500h6.500-6.500q-8 2.500-8 11.500v99q0 11-10 11.500" fill="none"/>
            <path d="M575 1090v-22h1567v22z" fill="#fff" stroke-width="2.200"/>
            <path d="M1082 599h797.500v171.500H1082z" fill="#fff" stroke="#4a678f"/>
          </g>
          <text x="729" y="355" font-size="22" font-weight="350" fill="#333">栈帧</text><text x="1376" y="374" font-size="22" font-weight="350" fill="#333">附加信息</text>
          <text x="1170.500" y="696.500" font-size="28.200" font-weight="350" fill="#333">动态链接将这些符号方法引用转换为具体方法引用</text>
          <g fill="#fff" stroke="#4a8bd0" stroke-width="1.300"><path d="M1078 595h8v8h-8zM1476.500 595h8v8h-8zM1875 595h8v8h-8zM1078 680.500h8v8h-8zM1875 680.500h8v8h-8zM1078 766.500h8v8h-8zM1476.500 766.500h8v8h-8zM1875 766.500h8v8h-8z"/></g>
          <g fill="#cbdef8"><circle cx="1480.500" cy="581.500" r="8"/><circle cx="1480.500" cy="787.500" r="8"/><circle cx="1064.500" cy="684.500" r="8"/><circle cx="1896.500" cy="684.500" r="8"/></g>
          <path d="M1476.500 581.500h8m-4-4v8M1476.500 787.500h8m-4-4v8M1060.500 684.500h8m-4-4v8M1892.500 684.500h8m-4-4v8" stroke="#fff" stroke-width="1.300"/>
          <path d="M1883 583q11-3 12 10m-8-12l-4 2 2 3M1892 593l3.500 2 1.500-3" fill="none" stroke="#8f959e" stroke-width="1.800"/>
        </svg>
        <div class="flex-1 pt-[207px] pl-px"><div class="w-[5px] h-[106px] rounded-full bg-[#c0c1c3]"></div></div>
      </div>
      <div class="h-[7px] pl-[454px] pt-px"><div class="w-[750px] h-[5px] rounded-full bg-[#c8c9cb]"></div></div>
    </div>
  </div>
  <!-- status bar -->
  <div class="h-[25px] shrink-0 bg-[#f2f2f3] pt-px flex items-center text-[13px] text-[#333]">
    <span class="ml-[9px]">图形：1/14</span>
    <svg class="ml-auto" width="52" height="16" fill="none" stroke="#777"><path d="M1.500 1.500h13v13h-13zM1.500 5.500h13M5.500 5.500v9M5.500 10h9"/><path d="M36 3l4-1.500 5 2 4-2v11l-4 2-5-2-4 1.500zM40 1.500v11M45 3.500v11" stroke="#555"/></svg>
    <svg class="ml-[17px]" width="14" height="14"><path d="M0 7h14" stroke="#777" stroke-width="1.300"/></svg>
    <svg class="ml-[15px]" width="117" height="14"><path d="M0 7h117" stroke="#333" stroke-width="2"/><circle cx="53" cy="7" r="5" fill="#fff" stroke="#444" stroke-width="1.400"/></svg>
    <svg class="ml-[15px]" width="14" height="14"><path d="M0 7h14M7 0v14" stroke="#555" stroke-width="1.300"/></svg>
    <span class="ml-[20px] w-[34px] text-[12.800px]">100%</span>
    <svg class="ml-[27px]" width="15" height="15" fill="none" stroke="#444" stroke-width="1.300"><path d="M1 5V1h4M10 1h4v4M14 10v4h-4M5 14H1v-4"/></svg>
    <span class="ml-[28px] mr-[31px] size-[16px] rounded-full bg-[#23262c] text-white text-[11px] leading-[16px] font-bold text-center">?</span>
  </div>
</div>

<!-- capture frame -->
<div class="absolute left-[283px] top-[51px] w-[1947px] h-[1067px] border-[5px] border-b-0 border-[#82fb5e]"></div>
<div class="absolute left-[282px] top-[51px] w-[22px] h-[20px] border-t-[5px] border-l-[6px] border-[#d3180f]"></div>
<div class="absolute left-[2208px] top-[51px] w-[22px] h-[20px] border-t-[5px] border-r-[5px] border-[#d3180f]"></div>
<div class="absolute left-[1148px] top-[29px] w-[217px] h-[26px] bg-[#7cfc4f] text-center text-[12.500px] leading-[22px] text-[#35662a] whitespace-nowrap font-['Noto_Sans_CJK_SC',sans-serif]">单击此处拖动(1788x1066)</div>

<!-- taskbar -->
<div class="absolute left-[226px] top-[1118px] w-[2080px] h-[52px] bg-[#d9dad9] border-t border-[#a9a9a9] flex items-center text-[#222] whitespace-nowrap">
  <svg class="ml-[20px]" width="31" height="32"><path d="M6 26q-6 0-6-5 0-4 5-4 3-7 10-5 5 0 7 5 5 1 5 4.500T22 26z" fill="#a9bfee"/><path d="M3 25q8-7 20 0z" fill="#dfe8fb"/><circle cx="21" cy="8.700" r="8.500" fill="#a92a2a"/><text x="18" y="13" font-size="12" fill="#fff">1</text></svg>
  <div class="ml-[3px] w-[41px] text-[12.500px] leading-[16.500px]"><div>18°C</div><div>阴</div></div>
  <svg class="ml-[502px]" width="25" height="25"><path d="M0 0h12v12H0z" fill="#5fb8e8"/><path d="M13 0h12v12H13z" fill="#4a9fdc"/><path d="M0 13h12v12H0z" fill="#3d97da"/><path d="M13 13h12v12H13z" fill="#2f80cc"/></svg>
  <div class="ml-[15px] w-[236px] h-[32px] rounded-full bg-[#f3f3f3] shadow-[0_1px_1px_#bbb] flex items-center text-[15px] text-[#444]"><svg class="ml-[11px]" width="17" height="17" fill="none" stroke="#333" stroke-width="1.800"><circle cx="7" cy="7" r="5.500"/><path d="M11 11l4.500 4.500"/></svg><span class="ml-[11px]">搜索</span><svg class="ml-auto mr-[2px]" width="52" height="26"><path d="M0 24q6-10 20-12 20-3 31 6 0 5-5 7-20 1-46-1z" fill="#80a83a"/><path d="M4 23q8-8 16-7-4 3 0 7z" fill="#8fd2e4"/><path d="M17 2q14 2 15 12 0 8-12 9 7-3 7-10 0-6-10-9z" fill="#7a5427"/><path d="M38 20q-3-7 2-15 2 3 3 6 1-5 4-6 2 7-1 15z" fill="#ecc33a"/></svg></div>
  <svg class="ml-[14px]" width="26" height="26"><path d="M0 7h20v18H0z" fill="#2b2b2b"/><path d="M7 1h19v17H7z" fill="#f6f6f6" fill-opacity=".8"/></svg>
  <div class="ml-[11px] flex text-center">
    <div class="w-[48px] h-[50px] flex flex-col items-center pt-[12px]"><svg width="27" height="27" viewBox="0 0 26 26"><circle cx="13" cy="13" r="12.500" fill="#d93a31"/><path d="M1.500 8.500A12.500 12.500 0 0 0 11.500 25.500L17 15l-8-.5z" fill="#2f9e4f"/><path d="M24.500 8.500A12.500 12.500 0 0 1 11.500 25.500L18 15 17 8.500z" fill="#fbc930"/><circle cx="13" cy="13" r="6" fill="#fff"/><circle cx="13" cy="13" r="4.700" fill="#3b78e0"/></svg><i class="mt-[3px] w-[6px] h-[4px] rounded-full bg-[#7e7e7e]"></i></div>
    <div class="-mr-px w-[48px] h-[50px] px-[3px]"><div class="h-[44px] mt-[4px] rounded-[4px] bg-[#f8e1e6] flex flex-col items-center pt-[8px]"><svg width="24" height="27"><rect y="1" width="24" height="25" rx="5" fill="#2b85ee"/><path d="M7 5q9 4 11 8l-2 2 2 1-6 7v-6q-3-1-4-5l1-1q-2-3-2-6z" fill="#fff"/></svg><i class="mt-[3px] w-[6px] h-[4px] rounded-full bg-[#a62a2a]"></i></div></div>
    <div class="w-[48px] h-[50px] flex flex-col items-center pt-[12px]"><svg width="27" height="27"><path d="M0 2h10l2 3h15v19H0z" fill="#c89428"/><path d="M0 6h27v18H0z" fill="#f6cd55"/><path d="M5 18q0-2 2-2h13q2 0 2 2v7H5z" fill="#2a78c4"/></svg><i class="mt-[3px] w-[6px] h-[4px] rounded-full bg-[#7e7e7e]"></i></div>
    <div class="w-[47px] h-[50px] flex flex-col items-center pt-[12px]"><svg width="27" height="27"><rect width="27" height="27" rx="5" fill="#75bfd2"/><path d="M6 21q-4-1-3-5 1-2 4-2 2-7 7-6 5 0 6 6 4 0 4 4 0 3-3 3z" fill="#fff"/><path d="M9 14h9v4H9z" fill="#4a9cb5"/></svg><i class="mt-[3px] w-[6px] h-[4px] rounded-full bg-[#7e7e7e]"></i></div>
    <div class="w-[48px] h-[50px] px-[2px]"><div class="h-[44px] mt-[4px] rounded-[4px] bg-[#f8e1e6] flex flex-col items-center pt-[8px]"><svg width="27" height="27"><circle cx="11" cy="10" r="9.500" fill="#6ddb7b"/><path d="M5 17l-1 4 6-3z" fill="#6ddb7b"/><circle cx="19" cy="17" r="6.500" fill="#f0f0f0"/><g fill="#3c6a45"><circle cx="7.500" cy="8" r="1.200"/><circle cx="14" cy="8" r="1.200"/><circle cx="17" cy="15" r=".9"/><circle cx="21" cy="15" r=".9"/></g></svg><i class="mt-[3px] w-[6px] h-[4px] rounded-full bg-[#a62a2a]"></i></div></div>
    <div class="w-[48px] h-[50px] px-[4px]"><div class="h-[44px] mt-[4px] rounded-[4px] bg-[#ececec] flex flex-col items-center pt-[8px]"><svg width="27" height="27" fill="none" stroke="#eab77a" stroke-width="1.700"><path d="M5 5q-2 3 1 13 2 5 5 1l7-13q3-4 5 0 1 4-2 12-2 5-5 1L9 6Q6 2 5 5z"/></svg><i class="mt-[3px] w-[17px] h-[4px] rounded-full bg-[#3c7fbf]"></i></div></div>
    <div class="w-[48px] h-[50px] flex flex-col items-center pt-[12px]"><svg width="26" height="27"><rect x=".5" y=".5" width="25" height="26" rx="3" fill="#f4f6f8" stroke="#7f8b97"/><path d="M14 3q2 3-1 5t0 5M16 7q-3 2-1 5" stroke="#e0762e" stroke-width="1.500" fill="none"/><path d="M7 14h11v5q-5 3-10 0zM18 15q4 0 0 4M5 22q8 3 16 0" fill="none" stroke="#48708f" stroke-width="1.600"/></svg><i class="mt-[3px] w-[6px] h-[4px] rounded-full bg-[#7e7e7e]"></i></div>
    <div class="w-[47px] h-[50px] flex flex-col items-center pt-[12px]"><svg width="27" height="27"><use href="#wps" y="2" width="27" height="24"/></svg><i class="mt-[3px] w-[6px] h-[4px] rounded-full bg-[#7e7e7e]"></i></div>
    <div class="w-[48px] h-[50px] flex flex-col items-center pt-[12px]"><svg width="27" height="27"><use href="#deer"/></svg><i class="mt-[3px] w-[6px] h-[4px] rounded-full bg-[#7e7e7e]"></i></div>
    <div class="w-[48px] h-[50px] flex flex-col items-center pt-[12px]"><svg width="27" height="27"><use href="#wps" y="2" width="27" height="24"/></svg><i class="mt-[3px] w-[6px] h-[4px] rounded-full bg-[#7e7e7e]"></i></div>
    <div class="w-[47px] h-[50px] flex flex-col items-center pt-[12px]"><svg width="27" height="27"><path d="M1 3l10-3 5 8L2 27z" fill="#c43584"/><path d="M0 12l8-2-3 8z" fill="#f08a30"/><path d="M15 3l5-3 7 6v16l-9 5-8-5z" fill="#2f6bd8"/><path d="M2 20l8-2 5 4-11 5z" fill="#7a48b8"/><path d="M5 5h16v17H5z" fill="#111"/><path d="M7.500 8h4m-2 0v6m-2 0h4M14 8h3v4q0 2-3 2M7.500 19h6" stroke="#fff" stroke-width="1.400" fill="none"/></svg><i class="mt-[3px] w-[6px] h-[4px] rounded-full bg-[#7e7e7e]"></i></div>
    <div class="w-[48px] h-[50px] flex flex-col items-center pt-[12px]"><svg width="27" height="27"><path d="M2 2h20v25H2z" fill="#f8faf5" stroke="#777"/><path d="M3 14q10-5 18 0v12H3z" fill="#83c83c"/><path d="M7 7v9M9 11h8" stroke="#222" stroke-width="1.600"/><path d="M24 1l2 2-7 17-3 2 1-4z" fill="#dd9b35"/></svg><i class="mt-[3px] w-[6px] h-[4px] rounded-full bg-[#7e7e7e]"></i></div>
  </div>
  <svg class="ml-auto" width="50" height="20" fill="none"><path d="M2 13l5.500-6 5.500 6" stroke="#222" stroke-width="1.600"/><rect x="39.500" y="1" width="6" height="11" rx="3" stroke="#4268b0" stroke-width="1.500"/><path d="M37 8q0 7 5.500 7T48 8m-5.500 7v4" stroke="#4268b0" stroke-width="1.500"/></svg>
  <span class="ml-[19px] text-[16px]">英</span><span class="ml-[25px] text-[16px]">拼</span>
  <svg class="ml-[23px]" width="72" height="22" fill="none" stroke="#222" stroke-width="1.400"><path d="M12 3H2v13h12M5 19.500h8M9 16v3.500M14 2.500h4v6h-4zM16 8.500V19"/><path d="M28 9h3l4-4v12l-4-4h-3zM37 8q2 3 0 6M40 6q3 5 0 10"/><rect x="56" y="6" width="13" height="10" rx="1"/><path d="M59 8h8v6h-8z" fill="#222"/><path d="M70.500 9v4"/><path d="M57 2l-3 5h4l-3 5" stroke-width="1.600"/></svg>
  <div class="ml-[12px] mr-[21px] text-right text-[12.500px] leading-[17px] w-[65px]"><div>21:29</div><div>2023/11/7</div></div>
</div>
</div>
</body>
</html>
